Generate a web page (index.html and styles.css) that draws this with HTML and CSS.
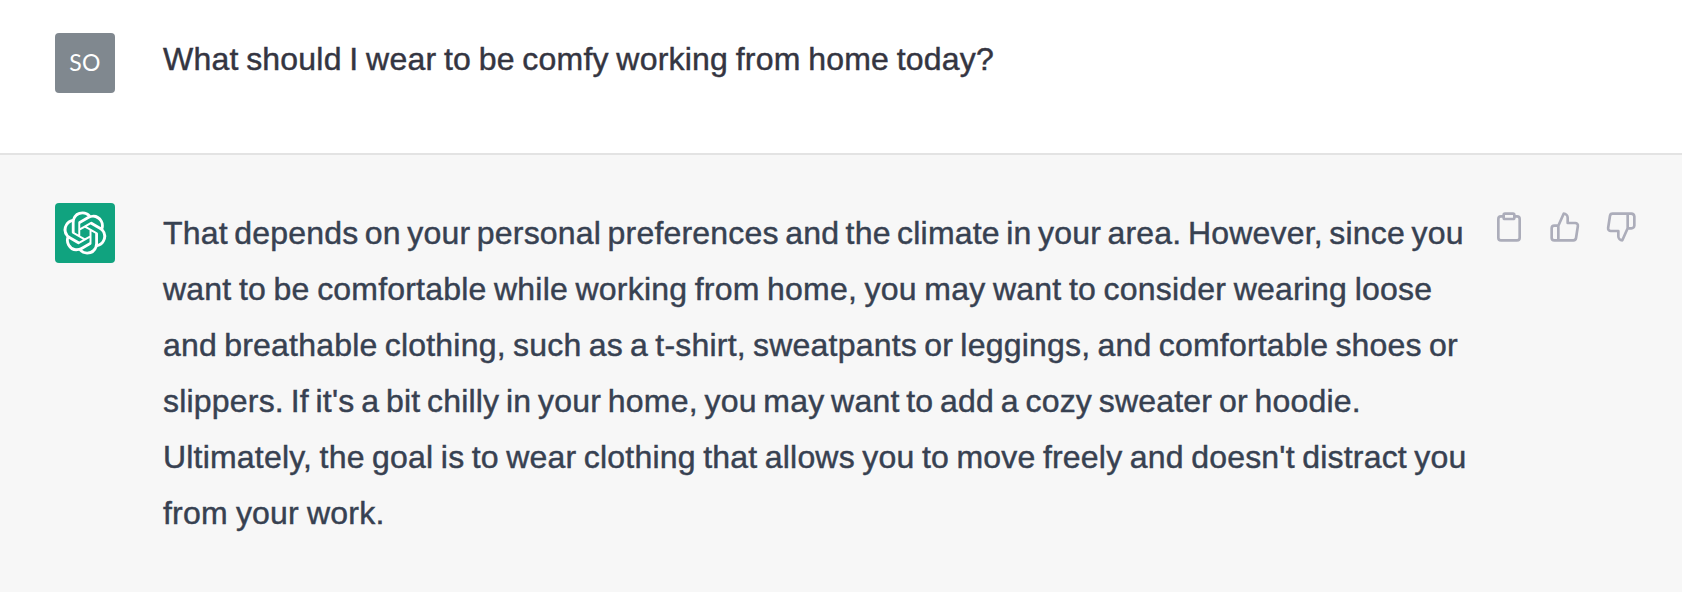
FILE: index.html
```html
<!DOCTYPE html>
<html lang="en">
<head>
<meta charset="utf-8">
<title>Chat</title>
<link rel="stylesheet" href="styles.css">
</head>
<body>
<main class="chat">
  <section class="message message-user">
    <div class="avatar avatar-user"><span class="initials">SO</span></div>
    <p class="text question"><span class="line q1">What should I wear to be comfy working from home today?</span></p>
  </section>
  <section class="message message-assistant">
    <div class="avatar avatar-assistant">
      <svg class="logo" viewBox="0 0 41 41" fill="currentColor"><path d="M37.532 16.87a9.963 9.963 0 0 0-.856-8.184 10.078 10.078 0 0 0-10.855-4.835A9.964 9.964 0 0 0 18.306.5a10.079 10.079 0 0 0-9.614 6.977 9.967 9.967 0 0 0-6.664 4.834 10.08 10.08 0 0 0 1.24 11.817 9.965 9.965 0 0 0 .856 8.185 10.079 10.079 0 0 0 10.855 4.835 9.965 9.965 0 0 0 7.516 3.35 10.078 10.078 0 0 0 9.617-6.981 9.967 9.967 0 0 0 6.663-4.834 10.079 10.079 0 0 0-1.243-11.813ZM22.498 37.886a7.474 7.474 0 0 1-4.799-1.735c.061-.033.168-.091.237-.134l7.964-4.6a1.294 1.294 0 0 0 .655-1.134V19.054l3.366 1.944a.12.12 0 0 1 .066.092v9.299a7.505 7.505 0 0 1-7.49 7.496ZM6.392 31.006a7.471 7.471 0 0 1-.894-5.023c.06.036.162.099.237.141l7.964 4.6a1.297 1.297 0 0 0 1.308 0l9.724-5.614v3.888a.12.12 0 0 1-.048.103l-8.051 4.649a7.504 7.504 0 0 1-10.24-2.744ZM4.297 13.62A7.469 7.469 0 0 1 8.2 10.333c0 .068-.004.19-.004.274v9.201a1.294 1.294 0 0 0 .654 1.132l9.723 5.614-3.366 1.944a.12.12 0 0 1-.114.01L7.04 23.856a7.504 7.504 0 0 1-2.743-10.237Zm27.658 6.437-9.724-5.615 3.367-1.943a.121.121 0 0 1 .113-.01l8.052 4.648a7.498 7.498 0 0 1-1.158 13.528v-9.476a1.293 1.293 0 0 0-.65-1.132Zm3.35-5.043c-.059-.037-.162-.099-.236-.141l-7.965-4.6a1.298 1.298 0 0 0-1.308 0l-9.723 5.614v-3.888a.12.12 0 0 1 .048-.103l8.05-4.645a7.497 7.497 0 0 1 11.135 7.763Zm-21.063 6.929-3.367-1.944a.12.12 0 0 1-.065-.092v-9.299a7.497 7.497 0 0 1 12.293-5.756 6.94 6.94 0 0 0-.236.134l-7.965 4.6a1.294 1.294 0 0 0-.654 1.132l-.006 11.225Zm1.829-3.943 4.33-2.501 4.332 2.5v5l-4.331 2.5-4.331-2.5V18Z"/></svg>
    </div>
    <p class="text answer">
      <span class="line a1">That depends on your personal preferences and the climate in your area. However, since you</span>
      <span class="line a2">want to be comfortable while working from home, you may want to consider wearing loose</span>
      <span class="line a3">and breathable clothing, such as a t-shirt, sweatpants or leggings, and comfortable shoes or</span>
      <span class="line a4">slippers. If it's a bit chilly in your home, you may want to add a cozy sweater or hoodie.</span>
      <span class="line a5">Ultimately, the goal is to wear clothing that allows you to move freely and doesn't distract you</span>
      <span class="line a6">from your work.</span>
    </p>
    <div class="actions">
      <svg class="icon" viewBox="0 0 24 24"><path d="M16 4h2a2 2 0 0 1 2 2v14a2 2 0 0 1-2 2H6a2 2 0 0 1-2-2V6a2 2 0 0 1 2-2h2"/><rect x="8" y="2" width="8" height="4" rx="1" ry="1"/></svg>
      <svg class="icon" viewBox="0 0 24 24"><path d="M14 9V5a3 3 0 0 0-3-3l-4 9v11h11.28a2 2 0 0 0 2-1.7l1.38-9a2 2 0 0 0-2-2.3zM7 22H4a2 2 0 0 1-2-2v-7a2 2 0 0 1 2-2h3"/></svg>
      <svg class="icon" viewBox="0 0 24 24"><path d="M10 15v4a3 3 0 0 0 3 3l4-9V2H5.72a2 2 0 0 0-2 1.7l-1.38 9a2 2 0 0 0 2 2.3zm7-13h2.67A2.31 2.31 0 0 1 22 4v7a2.31 2.31 0 0 1-2.33 2H17"/></svg>
    </div>
  </section>
</main>
</body>
</html>
```
FILE: styles.css
```css
* { box-sizing: border-box; }
body { margin: 0; background: #fff; font-family: "Liberation Sans", Arial, sans-serif; }
.chat { display: flex; flex-direction: column; height: 592px; overflow: hidden; }
.message { display: flex; align-items: flex-start; padding-left: 55px; }
.message-user { height: 153px; padding-top: 33px; color: #343541; }
.message-assistant { flex: 1; padding-top: 48px; background: #f7f7f7; border-top: 2px solid #e3e3e3; color: #374151; }
.avatar { display: flex; align-items: center; justify-content: center; flex: none; width: 60px; height: 60px; margin-right: 48px; border-radius: 4px; color: #fff; }
.avatar-user { background: #80888f; }
.avatar-assistant { background: #10a37f; }
.initials { margin-bottom: 2px; font: 400 23px/30px Lato, sans-serif; letter-spacing: 0.3px; }
.logo { width: 44px; height: 44px; }
.text { margin: 0; flex: none; width: 1330px; font-size: 32px; line-height: 56px; letter-spacing: 0.2px; white-space: nowrap; -webkit-text-stroke: 0.45px currentColor; }
.question { margin-top: -2px; }
.answer { margin-top: 2px; }
.line { display: block; width: max-content; }
.q1 { word-spacing: -1.42px; }
.a1 { word-spacing: -2.66px; }
.a2 { word-spacing: -1.54px; }
.a3 { word-spacing: -1.83px; }
.a4 { word-spacing: -2.38px; }
.a5 { word-spacing: -1.67px; }
.a6 { word-spacing: -1px; }
.actions { display: flex; gap: 24px; margin-top: 8px; }
.icon { width: 32px; height: 32px; fill: none; stroke: #acadba; stroke-width: 2; stroke-linecap: round; stroke-linejoin: round; }
```
